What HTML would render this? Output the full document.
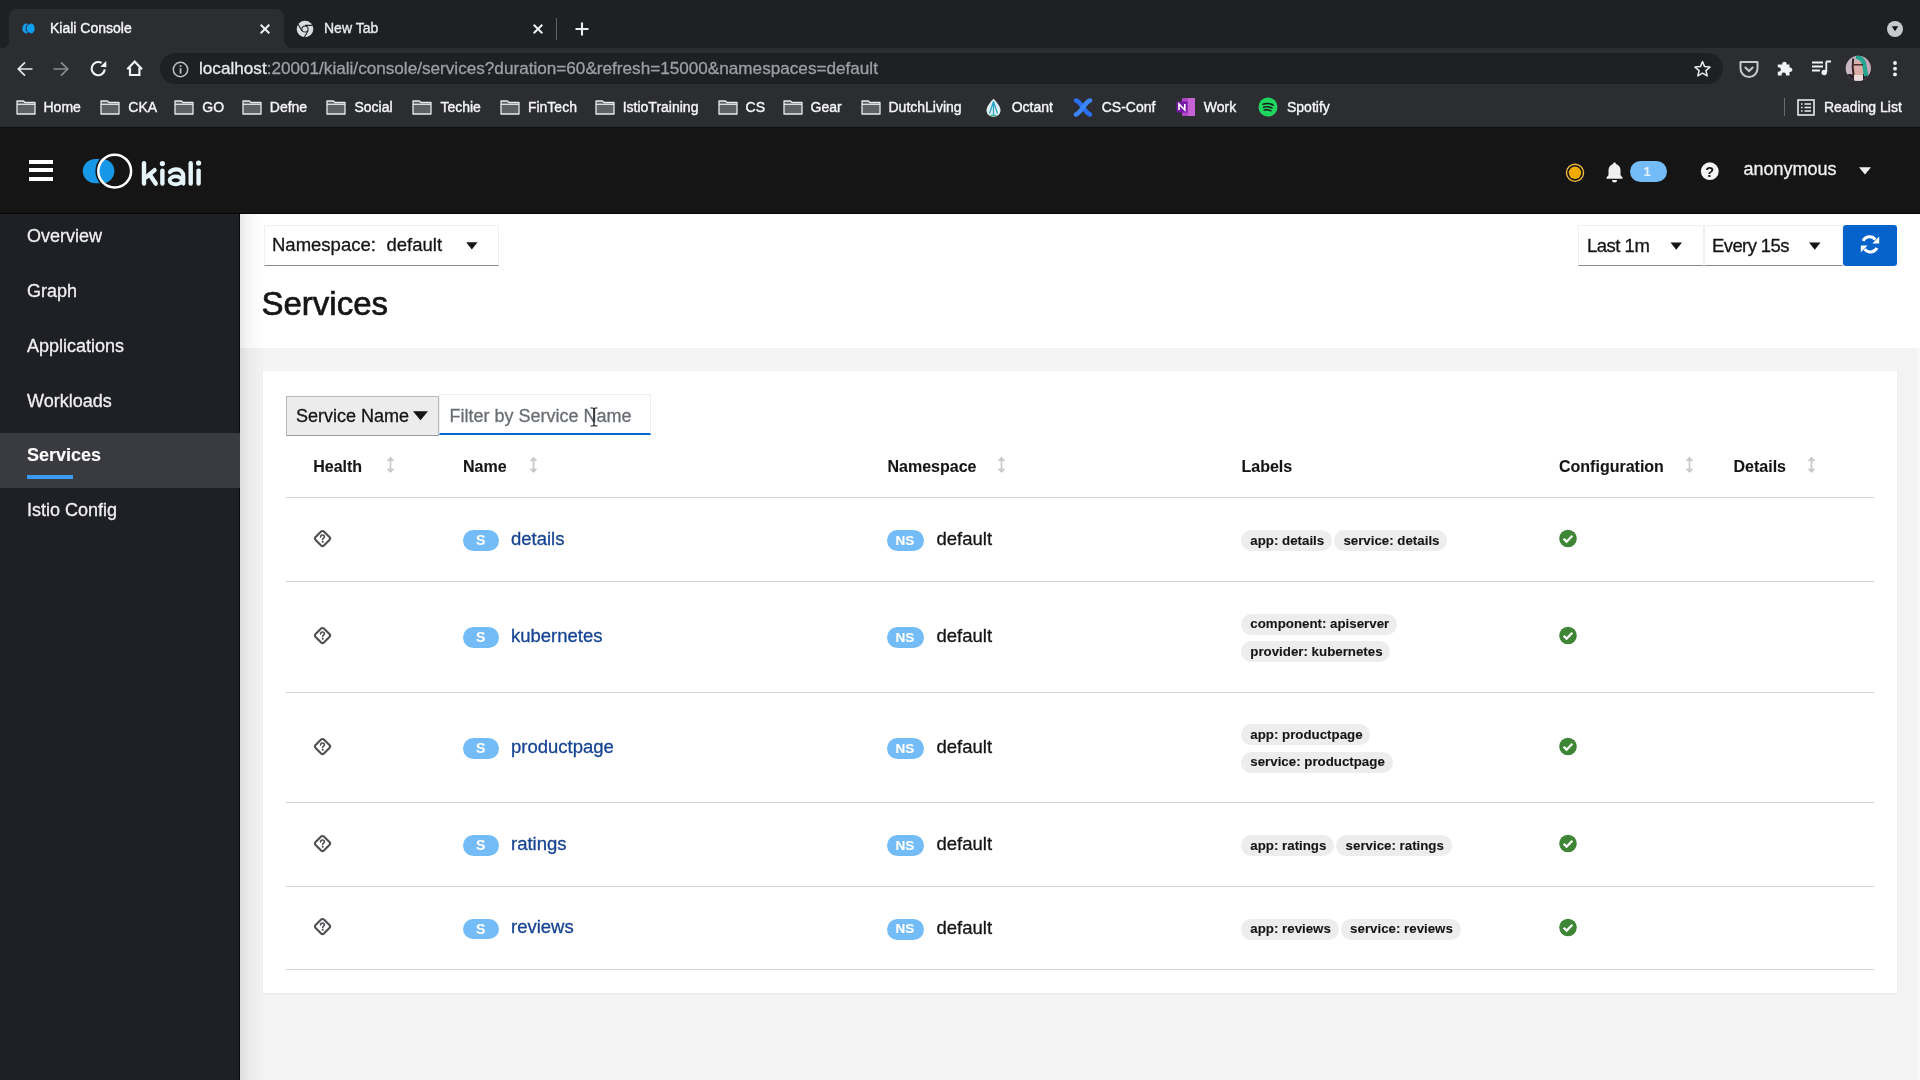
<!DOCTYPE html>
<html>
<head>
<meta charset="utf-8">
<style>
* { box-sizing: border-box; }
html, body { margin: 0; padding: 0; }
body { width: 1920px; height: 1080px; overflow: hidden; position: relative; background: #f3f3f3; font-family: "Liberation Sans", sans-serif; }
.abs { position: absolute; }
.t { position: absolute; white-space: nowrap; line-height: 1; -webkit-text-stroke: 0.3px currentColor; }
.t[style*="font-weight:700"] { -webkit-text-stroke: 0.1px currentColor; }
/* chrome */
#strip { left: 0; top: 0; width: 1920px; height: 48px; background: #1f2024; }
#acttab { left: 9px; top: 9px; width: 275px; height: 40px; background: #2c2d31; border-radius: 8px 8px 0 0; }
#toolbar { left: 0; top: 48px; width: 1920px; height: 42px; background: #2c2d31; }
#omni { left: 160px; top: 53px; width: 1563px; height: 31px; background: #1f2024; border-radius: 16px; }
#bmbar { left: 0; top: 90px; width: 1920px; height: 37px; background: #2c2d31; }
.bm { font-size: 14px; color: #f4f5f6; top: 101px; -webkit-text-stroke: 0.4px #f4f5f6; }
/* kiali */
#mast { left: 0; top: 127px; width: 1920px; height: 87px; background: #151515; border-top: 1px solid #0e0f12; border-bottom: 1px solid #060606; }
#side { left: 0; top: 214px; width: 240px; height: 866px; background: #1f2025; border-right:1px solid #0b0b0d; }
#shadow { left: 240px; top: 214px; width: 24px; height: 866px; background: linear-gradient(to right, rgba(3,3,3,0.09), rgba(3,3,3,0.03) 40%, rgba(3,3,3,0)); }
#phead { left: 240px; top: 214px; width: 1680px; height: 134px; background: #ffffff; }
#card { left: 263px; top: 371px; width: 1634px; height: 622px; background: #ffffff; box-shadow: 0 1px 2px rgba(3,3,3,0.05); }
.nav { left: 27px; font-size: 18px; color: #f0f0f0; }
</style>
</head>
<body>
<div id="root" style="position:absolute;left:0;top:0;width:1920px;height:1080px;overflow:hidden;will-change:transform;background:#f3f3f3">
<div id="strip" class="abs"></div>
<div id="acttab" class="abs"></div>
<div id="toolbar" class="abs"></div>
<div id="omni" class="abs"></div>
<div id="bmbar" class="abs"></div>

<!-- tab strip contents -->
<svg class="abs" style="left:0;top:39px" width="10" height="10"><path d="M0 10 H10 V0 A10 10 0 0 1 0 10Z" fill="#2c2d31"/></svg>
<svg class="abs" style="left:284px;top:39px" width="10" height="10"><path d="M0 0 V10 H10 A10 10 0 0 1 0 0Z" fill="#2c2d31"/></svg>
<svg class="abs" style="left:22px;top:23px" width="14" height="12"><ellipse cx="4.3" cy="5.5" rx="4" ry="5" fill="#1a9be8"/><ellipse cx="9.3" cy="5.5" rx="3.3" ry="5" fill="#0b9ff0"/><path d="M6.6 1 A4.5 5 0 0 0 6.6 10" stroke="#1f2f44" stroke-width="1" fill="none"/></svg>
<div class="t" style="left:50px;top:21.4px;font-size:14px;color:#f4f5f6;-webkit-text-stroke:0.4px #f4f5f6">Kiali Console</div>
<svg class="abs" style="left:259px;top:23px" width="12" height="12"><path d="M1.7 1.7 L10.3 10.3 M10.3 1.7 L1.7 10.3" stroke="#eceef0" stroke-width="2"/></svg>
<svg class="abs" style="left:296px;top:20px" width="18" height="18" viewBox="0 0 18 18"><circle cx="9" cy="9" r="8.3" fill="#dadce0"/><circle cx="9" cy="9" r="3.6" fill="#1f2024"/><circle cx="9" cy="9" r="2.6" fill="#dadce0"/><path d="M9 5.4 H16.6 M5.9 10.8 L2.1 4.3 M12.1 10.8 L8.3 17.3" stroke="#1f2024" stroke-width="1.1"/></svg>
<div class="t" style="left:324px;top:21.4px;font-size:14px;color:#e8eaed;-webkit-text-stroke:0.35px #e8eaed">New Tab</div>
<svg class="abs" style="left:532px;top:23px" width="12" height="12"><path d="M1.7 1.7 L10.3 10.3 M10.3 1.7 L1.7 10.3" stroke="#eceef0" stroke-width="2"/></svg>
<div class="abs" style="left:556px;top:18px;width:1px;height:22px;background:#5f6368"></div>
<svg class="abs" style="left:574px;top:21px" width="16" height="16"><path d="M8 1.5 V14.5 M1.5 8 H14.5" stroke="#eceef0" stroke-width="2.1"/></svg>
<svg class="abs" style="left:1886px;top:20px" width="18" height="18"><circle cx="9" cy="9" r="8" fill="#c8c9cc"/><path d="M5.8 6.3 H12.2 L9 11.3Z" fill="#111"/></svg>

<!-- toolbar contents -->
<svg class="abs" style="left:16px;top:60px" width="18" height="18" viewBox="0 0 18 18"><path d="M16.5 9 H2.5 M9 2.3 L2.3 9 L9 15.7" stroke="#e8eaed" stroke-width="1.7" fill="none"/></svg>
<svg class="abs" style="left:52px;top:60px" width="18" height="18" viewBox="0 0 18 18"><path d="M1.5 9 H15.5 M9 2.3 L15.7 9 L9 15.7" stroke="#8b8d91" stroke-width="1.7" fill="none"/></svg>
<svg class="abs" style="left:80px;top:52px" width="30" height="30" viewBox="80 52 30 30"><path d="M101.6 62.9 A6.6 6.6 0 1 0 104.8 69.4" stroke="#f1f3f4" stroke-width="2.1" fill="none"/><path d="M106.2 60.9 L106.4 67.2 L100.3 66.8Z" fill="#f1f3f4"/></svg>
<svg class="abs" style="left:120px;top:52px" width="30" height="30" viewBox="120 52 30 30"><path d="M127.3 69.2 L134.7 61.6 L142 69.2" stroke="#f1f3f4" stroke-width="2.2" fill="none" stroke-linejoin="miter"/><path d="M130 67.5 V75 H139.4 V67.5" stroke="#f1f3f4" stroke-width="2.2" fill="none"/></svg>
<svg class="abs" style="left:172px;top:61px" width="17" height="17" viewBox="0 0 17 17"><circle cx="8.5" cy="8.5" r="7.2" stroke="#bdc1c6" stroke-width="1.5" fill="none"/><rect x="7.7" y="7.2" width="1.7" height="5.4" fill="#bdc1c6"/><circle cx="8.55" cy="4.9" r="1" fill="#bdc1c6"/></svg>
<div class="t" style="left:199px;top:60px;font-size:17.15px;color:#9aa0a6"><span style="color:#e8eaed">localhost</span>:20001/kiali/console/services?duration=60&amp;refresh=15000&amp;namespaces=default</div>
<svg class="abs" style="left:1693px;top:60px" width="19" height="18" viewBox="0 0 19 18"><path d="M9.5 1.6 L11.6 6.6 L17 7.1 L12.9 10.6 L14.2 15.9 L9.5 13.1 L4.8 15.9 L6.1 10.6 L2 7.1 L7.4 6.6Z" stroke="#e8eaed" stroke-width="1.5" fill="none" stroke-linejoin="round"/></svg>
<svg class="abs" style="left:1738px;top:60px" width="22" height="19" viewBox="0 0 22 19"><path d="M2.5 2 H19.5 V8.5 A8.5 8.5 0 0 1 2.5 8.5Z" stroke="#c8c9cc" stroke-width="2" fill="none" stroke-linejoin="round"/><path d="M6.8 7 L11 11 L15.2 7" stroke="#c8c9cc" stroke-width="2" fill="none"/></svg>
<svg class="abs" style="left:1776px;top:59px" width="18" height="18" viewBox="0 0 18 18"><path d="M3 5.5 H6.3 A2.2 2.2 0 1 1 10.5 5.5 H13.5 V8.6 A2.2 2.2 0 1 1 13.5 12.8 V16.5 H9.8 A2.2 2.2 0 1 0 5.8 16.5 H1.8 V12.5 A2.2 2.2 0 1 0 1.8 8.5 V5.5Z" fill="#f1f3f4"/></svg>
<svg class="abs" style="left:1811px;top:60px" width="21" height="16" viewBox="0 0 21 16"><path d="M1 2.5 H12 M1 6.5 H12 M1 10.5 H9" stroke="#f1f3f4" stroke-width="1.8"/><path d="M15.3 1.5 V12 M15.3 1.5 H20" stroke="#f1f3f4" stroke-width="1.8"/><circle cx="13.2" cy="12.5" r="2.7" fill="#f1f3f4"/></svg>
<svg class="abs" style="left:1845px;top:55px" width="26" height="27" viewBox="0 0 26 27"><defs><clipPath id="av"><circle cx="13.2" cy="13.3" r="12.5"/></clipPath></defs><g clip-path="url(#av)"><rect width="26" height="27" fill="#c8b6c2"/><rect x="17" y="0" width="9" height="27" fill="#c9a6b8"/><path d="M0 20 C4 18 8 19 10 21 L10 27 H0Z" fill="#2b1f2b"/><path d="M18 19 C21 19 24 20 26 22 V27 H16Z" fill="#261c26"/><ellipse cx="13" cy="14.5" rx="5.6" ry="8.6" fill="#dcaca6"/><path d="M8.2 3.5 C7.4 9 7.6 15 8.6 20" stroke="#3a2424" stroke-width="2" fill="none"/><path d="M11 1.5 C16 2.5 19 6 19.5 11 C20 15 20.5 18 21.5 21" stroke="#28a58e" stroke-width="4.5" fill="none"/><path d="M7 9.8 H18" stroke="#4b2c2c" stroke-width="1.6"/><rect x="9" y="20" width="9" height="7" fill="#eadada"/></g></svg>
<svg class="abs" style="left:1891px;top:60px" width="8" height="18"><circle cx="4" cy="3" r="1.9" fill="#f1f3f4"/><circle cx="4" cy="8.7" r="1.9" fill="#f1f3f4"/><circle cx="4" cy="14.4" r="1.9" fill="#f1f3f4"/></svg>

<!-- bookmarks -->
<svg class="abs" style="left:15.5px;top:99px" width="20" height="16" viewBox="0 0 20 16"><path d="M1 2 H7.5 L9 3.5 H19 V15 H1Z" fill="#5f6063" stroke="#e8eaed" stroke-width="1.3" stroke-linejoin="round"/><path d="M1 5.3 H19" stroke="#e8eaed" stroke-width="1.2"/></svg><div class="t bm" style="left:43.5px;top:100.15px">Home</div>
<svg class="abs" style="left:100.3px;top:99px" width="20" height="16" viewBox="0 0 20 16"><path d="M1 2 H7.5 L9 3.5 H19 V15 H1Z" fill="#5f6063" stroke="#e8eaed" stroke-width="1.3" stroke-linejoin="round"/><path d="M1 5.3 H19" stroke="#e8eaed" stroke-width="1.2"/></svg><div class="t bm" style="left:128.3px;top:100.15px">CKA</div>
<svg class="abs" style="left:174.3px;top:99px" width="20" height="16" viewBox="0 0 20 16"><path d="M1 2 H7.5 L9 3.5 H19 V15 H1Z" fill="#5f6063" stroke="#e8eaed" stroke-width="1.3" stroke-linejoin="round"/><path d="M1 5.3 H19" stroke="#e8eaed" stroke-width="1.2"/></svg><div class="t bm" style="left:202.3px;top:100.15px">GO</div>
<svg class="abs" style="left:241.8px;top:99px" width="20" height="16" viewBox="0 0 20 16"><path d="M1 2 H7.5 L9 3.5 H19 V15 H1Z" fill="#5f6063" stroke="#e8eaed" stroke-width="1.3" stroke-linejoin="round"/><path d="M1 5.3 H19" stroke="#e8eaed" stroke-width="1.2"/></svg><div class="t bm" style="left:269.8px;top:100.15px">Defne</div>
<svg class="abs" style="left:326.4px;top:99px" width="20" height="16" viewBox="0 0 20 16"><path d="M1 2 H7.5 L9 3.5 H19 V15 H1Z" fill="#5f6063" stroke="#e8eaed" stroke-width="1.3" stroke-linejoin="round"/><path d="M1 5.3 H19" stroke="#e8eaed" stroke-width="1.2"/></svg><div class="t bm" style="left:354.4px;top:100.15px">Social</div>
<svg class="abs" style="left:412.4px;top:99px" width="20" height="16" viewBox="0 0 20 16"><path d="M1 2 H7.5 L9 3.5 H19 V15 H1Z" fill="#5f6063" stroke="#e8eaed" stroke-width="1.3" stroke-linejoin="round"/><path d="M1 5.3 H19" stroke="#e8eaed" stroke-width="1.2"/></svg><div class="t bm" style="left:440.4px;top:100.15px">Techie</div>
<svg class="abs" style="left:499.9px;top:99px" width="20" height="16" viewBox="0 0 20 16"><path d="M1 2 H7.5 L9 3.5 H19 V15 H1Z" fill="#5f6063" stroke="#e8eaed" stroke-width="1.3" stroke-linejoin="round"/><path d="M1 5.3 H19" stroke="#e8eaed" stroke-width="1.2"/></svg><div class="t bm" style="left:527.9px;top:100.15px">FinTech</div>
<svg class="abs" style="left:594.7px;top:99px" width="20" height="16" viewBox="0 0 20 16"><path d="M1 2 H7.5 L9 3.5 H19 V15 H1Z" fill="#5f6063" stroke="#e8eaed" stroke-width="1.3" stroke-linejoin="round"/><path d="M1 5.3 H19" stroke="#e8eaed" stroke-width="1.2"/></svg><div class="t bm" style="left:622.7px;top:100.15px">IstioTraining</div>
<svg class="abs" style="left:717.6px;top:99px" width="20" height="16" viewBox="0 0 20 16"><path d="M1 2 H7.5 L9 3.5 H19 V15 H1Z" fill="#5f6063" stroke="#e8eaed" stroke-width="1.3" stroke-linejoin="round"/><path d="M1 5.3 H19" stroke="#e8eaed" stroke-width="1.2"/></svg><div class="t bm" style="left:745.6px;top:100.15px">CS</div>
<svg class="abs" style="left:782.5px;top:99px" width="20" height="16" viewBox="0 0 20 16"><path d="M1 2 H7.5 L9 3.5 H19 V15 H1Z" fill="#5f6063" stroke="#e8eaed" stroke-width="1.3" stroke-linejoin="round"/><path d="M1 5.3 H19" stroke="#e8eaed" stroke-width="1.2"/></svg><div class="t bm" style="left:810.5px;top:100.15px">Gear</div>
<svg class="abs" style="left:860.5px;top:99px" width="20" height="16" viewBox="0 0 20 16"><path d="M1 2 H7.5 L9 3.5 H19 V15 H1Z" fill="#5f6063" stroke="#e8eaed" stroke-width="1.3" stroke-linejoin="round"/><path d="M1 5.3 H19" stroke="#e8eaed" stroke-width="1.2"/></svg><div class="t bm" style="left:888.5px;top:100.15px">DutchLiving</div>
<svg class="abs" style="left:985px;top:98px" width="17" height="20" viewBox="0 0 17 20"><path d="M8.5 0.8 C12.5 5 15.5 9 15.5 12.5 C15.5 16.3 12.3 18.8 8.5 18.8 C4.7 18.8 1.5 16.3 1.5 12.5 C1.5 9 4.5 5 8.5 0.8Z" fill="#dfeff4"/><path d="M8.5 3.5 L4.5 15.5 M8.5 3.5 L12.5 15.5 M8.5 6 V17" stroke="#2aa3c9" stroke-width="1.3" fill="none"/><path d="M5.5 17.5 H11.5" stroke="#3fb58a" stroke-width="1.5"/></svg><div class="t bm" style="left:1011.7px;top:100.15px">Octant</div>
<svg class="abs" style="left:1072px;top:97px" width="22" height="21" viewBox="0 0 22 21"><path d="M4 3.5 C9 4.5 13 16 18 17.5" stroke="#2a6ff0" stroke-width="4.6" stroke-linecap="round" fill="none"/><path d="M18 3.5 C13 4.5 9 16 4 17.5" stroke="#3b86ff" stroke-width="4.6" stroke-linecap="round" fill="none"/></svg><div class="t bm" style="left:1101.7px;top:100.15px">CS-Conf</div>
<svg class="abs" style="left:1176px;top:97px" width="20" height="20" viewBox="0 0 20 20"><rect x="6" y="1" width="13" height="18" rx="1" fill="#b146c2"/><path d="M12 1 H19 V19 H12Z" fill="#c663d4"/><rect x="0.5" y="4.5" width="11" height="11" rx="1" fill="#7719aa"/><path d="M3 13 V7 L8.8 13 V7" stroke="#fff" stroke-width="1.6" fill="none"/></svg><div class="t bm" style="left:1203.8px;top:100.15px">Work</div>
<svg class="abs" style="left:1258px;top:97px" width="20" height="20" viewBox="0 0 20 20"><circle cx="10" cy="10" r="9.5" fill="#1ed760"/><path d="M5 7.3 C8.5 6.2 12.5 6.6 15.2 8.2 M5.6 10.3 C8.5 9.5 11.8 9.9 14 11.2 M6.2 13 C8.6 12.4 11 12.7 12.9 13.8" stroke="#1b1b1b" stroke-width="1.5" stroke-linecap="round" fill="none"/></svg><div class="t bm" style="left:1287px;top:100.15px">Spotify</div>
<div class="abs" style="left:1784px;top:98px;width:1px;height:18px;background:#6a6b6f"></div><svg class="abs" style="left:1797px;top:99px" width="18" height="17" viewBox="0 0 18 17"><rect x="1" y="1" width="16" height="15" stroke="#e8eaed" stroke-width="1.6" fill="none"/><path d="M4 5 H5.5 M7.5 5 H14 M4 8.5 H5.5 M7.5 8.5 H14 M4 12 H5.5 M7.5 12 H14" stroke="#e8eaed" stroke-width="1.6"/></svg><div class="t bm" style="left:1824px;top:100.15px">Reading List</div>


<div id="mast" class="abs"></div>
<div id="side" class="abs"></div>
<div id="phead" class="abs"></div>
<div id="card" class="abs"></div>
<div id="shadow" class="abs"></div>
<div class="abs" style="left:1916px;top:348px;width:4px;height:732px;background:linear-gradient(to right,#f5f5f5,#fafafa)"></div>


<!-- card content -->
<div class="abs" style="left:286px;top:395.5px;width:153px;height:40.5px;background:#ececec;border:1.5px solid #b8bbbe;border-bottom-color:#9a9da0"></div><div class="t" style="left:296px;top:406.66px;font-size:18px;color:#151515">Service Name</div><svg class="abs" style="left:412px;top:410px" width="17" height="12"><path d="M1 1.3 H16 L8.5 10.2Z" fill="#151515"/></svg>
<div class="abs" style="left:439px;top:394px;width:212px;height:41px;border:1px solid #f0f0f0;border-bottom:2px solid #0066cc"></div><div class="t" style="left:449.5px;top:406.66px;font-size:18px;color:#6a6e73">Filter by Service Name</div>
<svg class="abs" style="left:588px;top:406px" width="12" height="22" viewBox="0 0 12 22"><path d="M2.5 2 H4.5 Q6 2 6 3.5 V18.5 Q6 20 4.5 20 H2.5 M9.5 2 H7.5 Q6 2 6 3.5 M6 18.5 Q6 20 7.5 20 H9.5" stroke="#151515" stroke-width="1.2" fill="none"/></svg>
<div class="t" style="left:313.2px;top:458.86px;font-size:16px;font-weight:700;color:#151515">Health</div><svg class="abs" style="left:385.5px;top:456px" width="9" height="18" viewBox="0 0 9 18"><path d="M4.5 1.2 L7.6 4.6 H1.4Z M4.5 16.6 L7.6 13.2 H1.4Z" fill="#c9c9c9" stroke="#c9c9c9" stroke-width="1" stroke-linejoin="round"/><rect x="3.65" y="4" width="1.7" height="10" fill="#c9c9c9"/></svg>
<div class="t" style="left:463px;top:458.86px;font-size:16px;font-weight:700;color:#151515">Name</div><svg class="abs" style="left:529.0px;top:456px" width="9" height="18" viewBox="0 0 9 18"><path d="M4.5 1.2 L7.6 4.6 H1.4Z M4.5 16.6 L7.6 13.2 H1.4Z" fill="#c9c9c9" stroke="#c9c9c9" stroke-width="1" stroke-linejoin="round"/><rect x="3.65" y="4" width="1.7" height="10" fill="#c9c9c9"/></svg>
<div class="t" style="left:887.5px;top:458.86px;font-size:16px;font-weight:700;color:#151515">Namespace</div><svg class="abs" style="left:996.5px;top:456px" width="9" height="18" viewBox="0 0 9 18"><path d="M4.5 1.2 L7.6 4.6 H1.4Z M4.5 16.6 L7.6 13.2 H1.4Z" fill="#c9c9c9" stroke="#c9c9c9" stroke-width="1" stroke-linejoin="round"/><rect x="3.65" y="4" width="1.7" height="10" fill="#c9c9c9"/></svg>
<div class="t" style="left:1241.5px;top:458.86px;font-size:16px;font-weight:700;color:#151515">Labels</div>
<div class="t" style="left:1559px;top:458.86px;font-size:16px;font-weight:700;color:#151515">Configuration</div><svg class="abs" style="left:1684.5px;top:456px" width="9" height="18" viewBox="0 0 9 18"><path d="M4.5 1.2 L7.6 4.6 H1.4Z M4.5 16.6 L7.6 13.2 H1.4Z" fill="#c9c9c9" stroke="#c9c9c9" stroke-width="1" stroke-linejoin="round"/><rect x="3.65" y="4" width="1.7" height="10" fill="#c9c9c9"/></svg>
<div class="t" style="left:1733.5px;top:458.86px;font-size:16px;font-weight:700;color:#151515">Details</div><svg class="abs" style="left:1807.0px;top:456px" width="9" height="18" viewBox="0 0 9 18"><path d="M4.5 1.2 L7.6 4.6 H1.4Z M4.5 16.6 L7.6 13.2 H1.4Z" fill="#c9c9c9" stroke="#c9c9c9" stroke-width="1" stroke-linejoin="round"/><rect x="3.65" y="4" width="1.7" height="10" fill="#c9c9c9"/></svg>
<div class="abs" style="left:286px;top:497px;width:1588px;height:1px;background:#d2d2d2"></div>
<div class="abs" style="left:286px;top:581px;width:1588px;height:1px;background:#d2d2d2"></div>
<div class="abs" style="left:286px;top:691.5px;width:1588px;height:1px;background:#d2d2d2"></div>
<div class="abs" style="left:286px;top:802px;width:1588px;height:1px;background:#d2d2d2"></div>
<div class="abs" style="left:286px;top:886px;width:1588px;height:1px;background:#d2d2d2"></div>
<div class="abs" style="left:286px;top:969px;width:1588px;height:1px;background:#d2d2d2"></div>
<svg class="abs" style="left:312px;top:527.6px" width="21" height="21" viewBox="0 0 21 21"><rect x="4.6" y="4.6" width="11.8" height="11.8" rx="2" transform="rotate(45 10.5 10.5)" stroke="#4d4f52" stroke-width="2.1" fill="none"/><path d="M8.6 8.9 C8.6 7.7 9.4 7 10.5 7 C11.6 7 12.4 7.7 12.4 8.7 C12.4 9.9 10.7 10.1 10.7 11.6" stroke="#4d4f52" stroke-width="1.6" fill="none" stroke-linecap="round"/><circle cx="10.7" cy="13.7" r="1.05" fill="#4d4f52"/></svg><div class="abs" style="left:463px;top:530px;width:36px;height:20.5px;border-radius:10.5px;background:#73bcf7"></div><div class="t" style="left:476px;top:533.15px;font-size:14px;font-weight:700;color:#fff">S</div><div class="t" style="left:511px;top:529.74px;font-size:18.5px;color:#164492">details</div><div class="abs" style="left:887px;top:530px;width:37px;height:21px;border-radius:10.5px;background:#73bcf7"></div><div class="t" style="left:895.5px;top:533.89px;font-size:13.6px;font-weight:700;color:#fff">NS</div><div class="t" style="left:936.5px;top:530.14px;font-size:18.5px;color:#151515">default</div><div class="abs" style="left:1241.0px;top:530.0px;width:90.9px;height:21px;border-radius:10.5px;background:#ededed"></div><div class="t" style="left:1250.3px;top:533.75px;font-size:13.3px;font-weight:700;color:#151515">app: details</div><div class="abs" style="left:1334.1px;top:530.0px;width:113.1px;height:21px;border-radius:10.5px;background:#ededed"></div><div class="t" style="left:1343.4px;top:533.75px;font-size:13.3px;font-weight:700;color:#151515">service: details</div><svg class="abs" style="left:1558px;top:529px" width="20" height="20" viewBox="0 0 20 20"><circle cx="10" cy="9.5" r="8.8" fill="#3e8635"/><path d="M5.6 9.7 L8.6 12.6 L14.4 6.8" stroke="#fff" stroke-width="2.2" fill="none"/></svg>
<svg class="abs" style="left:312px;top:624.9px" width="21" height="21" viewBox="0 0 21 21"><rect x="4.6" y="4.6" width="11.8" height="11.8" rx="2" transform="rotate(45 10.5 10.5)" stroke="#4d4f52" stroke-width="2.1" fill="none"/><path d="M8.6 8.9 C8.6 7.7 9.4 7 10.5 7 C11.6 7 12.4 7.7 12.4 8.7 C12.4 9.9 10.7 10.1 10.7 11.6" stroke="#4d4f52" stroke-width="1.6" fill="none" stroke-linecap="round"/><circle cx="10.7" cy="13.7" r="1.05" fill="#4d4f52"/></svg><div class="abs" style="left:463px;top:627.3px;width:36px;height:20.5px;border-radius:10.5px;background:#73bcf7"></div><div class="t" style="left:476px;top:630.45px;font-size:14px;font-weight:700;color:#fff">S</div><div class="t" style="left:511px;top:627.04px;font-size:18.5px;color:#164492">kubernetes</div><div class="abs" style="left:887px;top:627.3px;width:37px;height:21px;border-radius:10.5px;background:#73bcf7"></div><div class="t" style="left:895.5px;top:631.19px;font-size:13.6px;font-weight:700;color:#fff">NS</div><div class="t" style="left:936.5px;top:627.44px;font-size:18.5px;color:#151515">default</div><div class="abs" style="left:1241.0px;top:613.5px;width:155.9px;height:21px;border-radius:10.5px;background:#ededed"></div><div class="t" style="left:1250.3px;top:617.30px;font-size:13.3px;font-weight:700;color:#151515">component: apiserver</div><div class="abs" style="left:1241.0px;top:640.8px;width:149.3px;height:21px;border-radius:10.5px;background:#ededed"></div><div class="t" style="left:1250.3px;top:644.60px;font-size:13.3px;font-weight:700;color:#151515">provider: kubernetes</div><svg class="abs" style="left:1558px;top:626.3px" width="20" height="20" viewBox="0 0 20 20"><circle cx="10" cy="9.5" r="8.8" fill="#3e8635"/><path d="M5.6 9.7 L8.6 12.6 L14.4 6.8" stroke="#fff" stroke-width="2.2" fill="none"/></svg>
<svg class="abs" style="left:312px;top:735.6px" width="21" height="21" viewBox="0 0 21 21"><rect x="4.6" y="4.6" width="11.8" height="11.8" rx="2" transform="rotate(45 10.5 10.5)" stroke="#4d4f52" stroke-width="2.1" fill="none"/><path d="M8.6 8.9 C8.6 7.7 9.4 7 10.5 7 C11.6 7 12.4 7.7 12.4 8.7 C12.4 9.9 10.7 10.1 10.7 11.6" stroke="#4d4f52" stroke-width="1.6" fill="none" stroke-linecap="round"/><circle cx="10.7" cy="13.7" r="1.05" fill="#4d4f52"/></svg><div class="abs" style="left:463px;top:738px;width:36px;height:20.5px;border-radius:10.5px;background:#73bcf7"></div><div class="t" style="left:476px;top:741.15px;font-size:14px;font-weight:700;color:#fff">S</div><div class="t" style="left:511px;top:737.74px;font-size:18.5px;color:#164492">productpage</div><div class="abs" style="left:887px;top:738px;width:37px;height:21px;border-radius:10.5px;background:#73bcf7"></div><div class="t" style="left:895.5px;top:741.89px;font-size:13.6px;font-weight:700;color:#fff">NS</div><div class="t" style="left:936.5px;top:738.14px;font-size:18.5px;color:#151515">default</div><div class="abs" style="left:1241.0px;top:724.2px;width:129.3px;height:21px;border-radius:10.5px;background:#ededed"></div><div class="t" style="left:1250.3px;top:728.00px;font-size:13.3px;font-weight:700;color:#151515">app: productpage</div><div class="abs" style="left:1241.0px;top:751.5px;width:151.5px;height:21px;border-radius:10.5px;background:#ededed"></div><div class="t" style="left:1250.3px;top:755.30px;font-size:13.3px;font-weight:700;color:#151515">service: productpage</div><svg class="abs" style="left:1558px;top:737px" width="20" height="20" viewBox="0 0 20 20"><circle cx="10" cy="9.5" r="8.8" fill="#3e8635"/><path d="M5.6 9.7 L8.6 12.6 L14.4 6.8" stroke="#fff" stroke-width="2.2" fill="none"/></svg>
<svg class="abs" style="left:312px;top:832.6px" width="21" height="21" viewBox="0 0 21 21"><rect x="4.6" y="4.6" width="11.8" height="11.8" rx="2" transform="rotate(45 10.5 10.5)" stroke="#4d4f52" stroke-width="2.1" fill="none"/><path d="M8.6 8.9 C8.6 7.7 9.4 7 10.5 7 C11.6 7 12.4 7.7 12.4 8.7 C12.4 9.9 10.7 10.1 10.7 11.6" stroke="#4d4f52" stroke-width="1.6" fill="none" stroke-linecap="round"/><circle cx="10.7" cy="13.7" r="1.05" fill="#4d4f52"/></svg><div class="abs" style="left:463px;top:835px;width:36px;height:20.5px;border-radius:10.5px;background:#73bcf7"></div><div class="t" style="left:476px;top:838.15px;font-size:14px;font-weight:700;color:#fff">S</div><div class="t" style="left:511px;top:834.74px;font-size:18.5px;color:#164492">ratings</div><div class="abs" style="left:887px;top:835px;width:37px;height:21px;border-radius:10.5px;background:#73bcf7"></div><div class="t" style="left:895.5px;top:838.89px;font-size:13.6px;font-weight:700;color:#fff">NS</div><div class="t" style="left:936.5px;top:835.14px;font-size:18.5px;color:#151515">default</div><div class="abs" style="left:1241.0px;top:835.0px;width:93.1px;height:21px;border-radius:10.5px;background:#ededed"></div><div class="t" style="left:1250.3px;top:838.75px;font-size:13.3px;font-weight:700;color:#151515">app: ratings</div><div class="abs" style="left:1336.3px;top:835.0px;width:115.3px;height:21px;border-radius:10.5px;background:#ededed"></div><div class="t" style="left:1345.6px;top:838.75px;font-size:13.3px;font-weight:700;color:#151515">service: ratings</div><svg class="abs" style="left:1558px;top:834px" width="20" height="20" viewBox="0 0 20 20"><circle cx="10" cy="9.5" r="8.8" fill="#3e8635"/><path d="M5.6 9.7 L8.6 12.6 L14.4 6.8" stroke="#fff" stroke-width="2.2" fill="none"/></svg>
<svg class="abs" style="left:312px;top:916.1px" width="21" height="21" viewBox="0 0 21 21"><rect x="4.6" y="4.6" width="11.8" height="11.8" rx="2" transform="rotate(45 10.5 10.5)" stroke="#4d4f52" stroke-width="2.1" fill="none"/><path d="M8.6 8.9 C8.6 7.7 9.4 7 10.5 7 C11.6 7 12.4 7.7 12.4 8.7 C12.4 9.9 10.7 10.1 10.7 11.6" stroke="#4d4f52" stroke-width="1.6" fill="none" stroke-linecap="round"/><circle cx="10.7" cy="13.7" r="1.05" fill="#4d4f52"/></svg><div class="abs" style="left:463px;top:918.5px;width:36px;height:20.5px;border-radius:10.5px;background:#73bcf7"></div><div class="t" style="left:476px;top:921.65px;font-size:14px;font-weight:700;color:#fff">S</div><div class="t" style="left:511px;top:918.24px;font-size:18.5px;color:#164492">reviews</div><div class="abs" style="left:887px;top:918.5px;width:37px;height:21px;border-radius:10.5px;background:#73bcf7"></div><div class="t" style="left:895.5px;top:922.39px;font-size:13.6px;font-weight:700;color:#fff">NS</div><div class="t" style="left:936.5px;top:918.64px;font-size:18.5px;color:#151515">default</div><div class="abs" style="left:1241.0px;top:918.5px;width:97.6px;height:21px;border-radius:10.5px;background:#ededed"></div><div class="t" style="left:1250.3px;top:922.25px;font-size:13.3px;font-weight:700;color:#151515">app: reviews</div><div class="abs" style="left:1340.8px;top:918.5px;width:119.8px;height:21px;border-radius:10.5px;background:#ededed"></div><div class="t" style="left:1350.1px;top:922.25px;font-size:13.3px;font-weight:700;color:#151515">service: reviews</div><svg class="abs" style="left:1558px;top:917.5px" width="20" height="20" viewBox="0 0 20 20"><circle cx="10" cy="9.5" r="8.8" fill="#3e8635"/><path d="M5.6 9.7 L8.6 12.6 L14.4 6.8" stroke="#fff" stroke-width="2.2" fill="none"/></svg>

<!-- masthead -->
<div class="abs" style="left:29px;top:160px;width:24px;height:4px;background:#fff"></div><div class="abs" style="left:29px;top:168px;width:24px;height:4.3px;background:#fff"></div><div class="abs" style="left:29px;top:177px;width:24px;height:4px;background:#fff"></div>
<svg class="abs" style="left:78px;top:150px" width="60" height="42" viewBox="78 150 60 42"><path d="M95.5 158.9 A12.8 12.2 0 0 0 95.5 183.3 L102.2 183.3 A12.2 12.2 0 0 0 102.2 158.9Z" fill="#1798e6"/><circle cx="114.6" cy="171.1" r="18.2" stroke="#151515" stroke-width="2" fill="none"/><path d="M114.6 156 A15 15 0 0 0 114.6 186" fill="none"/><circle cx="114.7" cy="171.1" r="16.4" stroke="#ffffff" stroke-width="2.5" fill="none"/></svg>
<svg class="abs" style="left:130px;top:150px" width="80" height="45" viewBox="130 150 80 45"><g stroke="#e6f5fa" stroke-width="4.4" stroke-linecap="round" fill="none"><path d="M144 163.2 V183.6"/><path d="M146.3 177.2 L154.6 170.1"/><path d="M149.6 174.6 L155.7 183.6"/><path d="M162.4 170.6 V183.6"/><path d="M190.7 163.2 V183.6"/><path d="M198.6 170.6 V183.6"/><path d="M183.3 183.6 V176.3 C183.3 171.8 180.4 169.4 176.2 169.4 C173.3 169.4 171.2 170.4 169.9 172.1" stroke-width="4.1"/><ellipse cx="175.7" cy="180.3" rx="6.1" ry="3.9" stroke-width="3.9"/></g><circle cx="162.4" cy="163.6" r="2.6" fill="#e6f5fa"/><circle cx="198.6" cy="163.1" r="2.6" fill="#e6f5fa"/></svg>
<svg class="abs" style="left:1564px;top:162px" width="22" height="22" viewBox="0 0 22 22"><circle cx="11" cy="10.8" r="8.55" stroke="#f2bb3a" stroke-width="1.4" fill="none"/><circle cx="11" cy="10.8" r="6.2" fill="#f0ab00"/></svg>
<svg class="abs" style="left:1605px;top:161px" width="19" height="22" viewBox="0 0 19 22"><path d="M9.5 1.5 C10.5 1.5 11 2.2 11 3 C14 3.8 15.5 6.5 15.5 9.5 V14 L17.5 16.5 V17.8 H1.5 V16.5 L3.5 14 V9.5 C3.5 6.5 5 3.8 8 3 C8 2.2 8.5 1.5 9.5 1.5Z" fill="#f0f0f0"/><path d="M7 19 A2.5 2.5 0 0 0 12 19Z" fill="#f0f0f0"/></svg>
<div class="abs" style="left:1630px;top:161px;width:36.5px;height:20.5px;border-radius:10.5px;background:#73bcf7"></div><div class="t" style="left:1643.5px;top:165.2px;font-size:13px;font-weight:700;color:#e3f1fc">1</div>
<svg class="abs" style="left:1700px;top:161px" width="20" height="20" viewBox="0 0 20 20"><circle cx="9.8" cy="10.2" r="8.9" fill="#f5f5f5"/><text x="9.8" y="16.2" text-anchor="middle" font-family="Liberation Sans" font-weight="700" font-size="14.5" fill="#151515">?</text></svg>
<div class="t" style="left:1743.5px;top:160.36px;font-size:18px;color:#f0f0f0">anonymous</div>
<svg class="abs" style="left:1858px;top:166px" width="14" height="10"><path d="M1 1.3 H13 L7 8.5Z" fill="#f0f0f0"/></svg>

<!-- sidebar -->
<div class="abs" style="left:0;top:433px;width:240px;height:54.5px;background:#3a3b40"></div><div class="abs" style="left:27px;top:475px;width:46px;height:4px;background:#3a9bf0"></div>
<div class="t nav" style="top:226.84px;">Overview</div>
<div class="t nav" style="top:281.74px;">Graph</div>
<div class="t nav" style="top:336.64px;">Applications</div>
<div class="t nav" style="top:391.54px;">Workloads</div>
<div class="t nav" style="top:446.44px;font-weight:700;color:#fff">Services</div>
<div class="t nav" style="top:501.34px;">Istio Config</div>

<!-- page header -->
<div class="abs" style="left:263.5px;top:225px;width:235.5px;height:40.5px;border:1px solid #f0f0f0;border-bottom-color:#8a8d90"></div><div class="t" style="left:272px;top:235.74px;font-size:18.5px;color:#151515">Namespace:</div><div class="t" style="left:386.5px;top:235.74px;font-size:18.5px;color:#151515">default</div><svg class="abs" style="left:465px;top:241px" width="14" height="10"><path d="M1.2 1.2 H12.5 L6.85 8.5Z" fill="#151515"/></svg>
<div class="t" style="left:261.5px;top:287.17px;font-size:33px;color:#151515;-webkit-text-stroke:0.7px #151515">Services</div>
<div class="abs" style="left:1578px;top:225px;width:126px;height:40.5px;border:1px solid #f0f0f0;border-bottom-color:#8a8d90"></div><div class="abs" style="left:1703.5px;top:225px;width:139px;height:40.5px;border:1px solid #f0f0f0;border-bottom-color:#8a8d90"></div><div class="t" style="left:1587px;top:236.74px;font-size:18.5px;color:#151515;letter-spacing:-0.5px">Last 1m</div><svg class="abs" style="left:1669px;top:241px" width="14" height="10"><path d="M1.5 1.4 H13 L7.25 8.8Z" fill="#151515"/></svg><div class="t" style="left:1712px;top:236.74px;font-size:18.5px;color:#151515;letter-spacing:-0.6px">Every 15s</div><svg class="abs" style="left:1808px;top:241px" width="14" height="10"><path d="M1 1.4 H12.5 L6.75 8.8Z" fill="#151515"/></svg>
<div class="abs" style="left:1842.5px;top:225px;width:54.5px;height:40.5px;background:#0663cb;border-radius:3px"></div><svg class="abs" style="left:1858px;top:232px" width="24" height="24" viewBox="1858 232 24 24"><path d="M1863.1 240.9 A7.2 7.2 0 0 1 1875.3 239.6" stroke="#fff" stroke-width="3" fill="none"/><path d="M1879.2 236.6 V243.4 H1872.4Z" fill="#fff"/><path d="M1876.9 247.9 A7.2 7.2 0 0 1 1864.7 249.2" stroke="#fff" stroke-width="3" fill="none"/><path d="M1860.8 252.2 V245.4 H1867.6Z" fill="#fff"/></svg>


</div>
</body>
</html>
